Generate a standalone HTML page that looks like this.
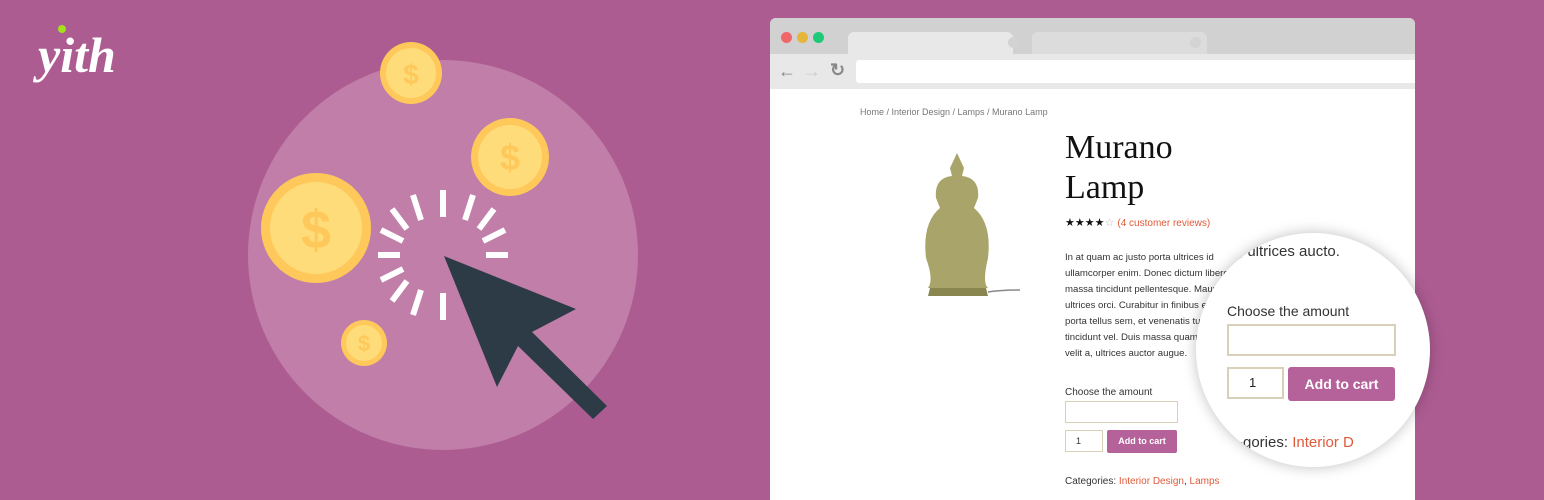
<!DOCTYPE html>
<html><head><style>
*{margin:0;padding:0;box-sizing:border-box}
body{width:1544px;height:500px;background:#ad5c92;position:relative;overflow:hidden;font-family:"Liberation Sans",sans-serif}
.a{position:absolute}
.t{font-family:"Liberation Sans",sans-serif;color:#333;font-size:10px}
</style></head><body>
<svg class="a" style="left:0;top:0" width="770" height="500">
<circle cx="443" cy="255" r="195" fill="#c07ea8"/>
<g font-family="Liberation Sans" font-weight="bold" text-anchor="middle" fill="#fec85a">
<circle cx="411" cy="73" r="31" fill="#fec85a"/><circle cx="411" cy="73" r="25" fill="#fedc7a"/><text x="411" y="84" font-size="28">$</text>
<circle cx="510" cy="157" r="39" fill="#fec85a"/><circle cx="510" cy="157" r="32" fill="#fedc7a"/><text x="510" y="170" font-size="36">$</text>
<circle cx="316" cy="228" r="55" fill="#fec85a"/><circle cx="316" cy="228" r="46" fill="#fedc7a"/><text x="316" y="248" font-size="54">$</text>
<circle cx="364" cy="343" r="23" fill="#fec85a"/><circle cx="364" cy="343" r="18" fill="#fedc7a"/><text x="364" y="351" font-size="22">$</text>
</g>
<g stroke="#fff" stroke-width="6">
<line x1="443" y1="190" x2="443" y2="217"/><line x1="443" y1="293" x2="443" y2="320"/>
<line x1="378" y1="255" x2="400" y2="255"/><line x1="486" y1="255" x2="508" y2="255"/>
<line x1="413" y1="195" x2="421" y2="220"/><line x1="473" y1="195" x2="465" y2="220"/>
<line x1="392" y1="209" x2="407" y2="229"/><line x1="494" y1="209" x2="479" y2="229"/>
<line x1="381" y1="230" x2="403" y2="241"/><line x1="505" y1="230" x2="483" y2="241"/>
<line x1="381" y1="280" x2="403" y2="269"/><line x1="392" y1="301" x2="407" y2="281"/>
<line x1="413" y1="315" x2="421" y2="290"/>
</g>
<path d="M444 256 L576 309 L532 332 L607 406 L593 419 L518 346 L497 387 Z" fill="#2d3b46"/>
<text x="38" y="72" font-family="Liberation Serif" font-style="italic" font-weight="bold" font-size="50" fill="#fff">yith</text>
<circle cx="62" cy="29" r="4" fill="#a5e01d"/>
</svg>

<div class="a" style="left:770px;top:18px;width:645px;height:482px;background:#fff;border-radius:6px 6px 0 0;overflow:hidden">
<div class="a" style="left:0;top:0;width:645px;height:36px;background:#d1d1d1"></div>
<div class="a" style="left:0;top:36px;width:645px;height:35px;background:#e8e8e8"></div>
<div class="a" style="left:86px;top:42px;width:570px;height:23px;background:#fff;border-radius:3px"></div>
<div class="a" style="left:78px;top:14px;width:165px;height:24px;background:#e8e8e8;border-radius:6px 6px 0 0"></div>
<div class="a" style="left:262px;top:14px;width:175px;height:22px;background:#dcdcdc;border-radius:6px 6px 0 0"></div>
<div class="a" style="left:238px;top:19px;width:11px;height:11px;border-radius:50%;background:#d3d3d3"></div>
<div class="a" style="left:420px;top:19px;width:11px;height:11px;border-radius:50%;background:#d3d3d3"></div>
<div class="a" style="left:11px;top:14px;width:11px;height:11px;border-radius:50%;background:#f0676a"></div>
<div class="a" style="left:27px;top:14px;width:11px;height:11px;border-radius:50%;background:#e6b63a"></div>
<div class="a" style="left:43px;top:14px;width:11px;height:11px;border-radius:50%;background:#1ec97a"></div>
<div class="a" style="left:8px;top:43px;font-size:18px;color:#888;font-weight:bold">←</div>
<div class="a" style="left:33px;top:43px;font-size:18px;color:#ccc;font-weight:bold">→</div>
<div class="a" style="left:60px;top:42px;font-size:18px;color:#888;font-weight:bold">↻</div>
<div class="a t" style="left:90px;top:89px;color:#777;font-size:9px">Home / Interior Design / Lamps / Murano Lamp</div>
<svg class="a" style="left:130px;top:130px" width="130" height="160">
<path d="M57 5 L64 20 L62 28 Q80 30 78 50 L74 60 Q92 75 88 110 Q82 135 88 140 L28 140 Q34 132 26 110 Q22 75 40 60 L36 50 Q34 30 52 28 L50 20 Z" fill="#a9a56a"/>
<path d="M30 140 L86 140 L88 148 L28 148 Z" fill="#8a8650"/>
<path d="M88 144 Q100 142 120 142" stroke="#888" fill="none" stroke-width="1.5"/>
</svg>
<div class="a" style="left:295px;top:110px;font-family:'Liberation Serif',serif;font-size:34px;line-height:40px;color:#111">Murano<br>Lamp</div>
<div class="a" style="left:295px;top:198px;font-size:11px;color:#111">★★★★<span style="color:#bbb">☆</span> <span style="color:#e05a3a;font-size:10px">(4 customer reviews)</span></div>
<div class="a t" style="left:295px;top:232px;line-height:16px;white-space:nowrap;font-size:9.6px">In at quam ac justo porta ultrices id<br>ullamcorper enim. Donec dictum libero<br>massa tincidunt pellentesque. Mauris<br>ultrices orci. Curabitur in finibus er<br>porta tellus sem, et venenatis tur<br>tincidunt vel. Duis massa quam,<br>velit a, ultrices auctor augue.</div>
<div class="a t" style="left:295px;top:369px">Choose the amount</div>
<div class="a" style="left:295px;top:383px;width:113px;height:22px;border:1px solid #d8d0b8"></div>
<div class="a t" style="left:295px;top:412px;width:38px;height:22px;border:1px solid #d8d0b8;padding:5px 10px;font-size:9px">1</div>
<div class="a" style="left:337px;top:412px;width:70px;height:23px;background:#b6629a;color:#fff;font-weight:bold;font-size:9px;text-align:center;line-height:23px;border-radius:2px">Add to cart</div>
<div class="a t" style="left:295px;top:458px">Categories: <span style="color:#e05a3a">Interior Design</span>, <span style="color:#e05a3a">Lamps</span></div>
</div>

<div class="a" style="left:1196px;top:233px;width:234px;height:234px;border-radius:50%;background:#fff;box-shadow:0 0 14px rgba(0,0,0,.25);overflow:hidden">
<div class="a" style="left:38px;top:10px;font-size:15px;color:#333;white-space:nowrap">-, ultrices aucto.</div>
<div class="a" style="left:31px;top:70px;font-size:14px;color:#333">Choose the amount</div>
<div class="a" style="left:31px;top:91px;width:169px;height:32px;border:2px solid #d8d0b8"></div>
<div class="a" style="left:31px;top:134px;width:57px;height:32px;border:2px solid #d8d0b8;font-size:13px;padding:6px 0 0 20px;color:#222">1</div>
<div class="a" style="left:92px;top:134px;width:107px;height:34px;background:#b6629a;border-radius:3px;color:#fff;font-weight:bold;font-size:14px;text-align:center;line-height:34px">Add to cart</div>
<div class="a" style="left:42px;top:201px;font-size:15px;color:#333;white-space:nowrap">-gories: <span style="color:#e05a3a">Interior D</span></div>
</div>
</body></html>
